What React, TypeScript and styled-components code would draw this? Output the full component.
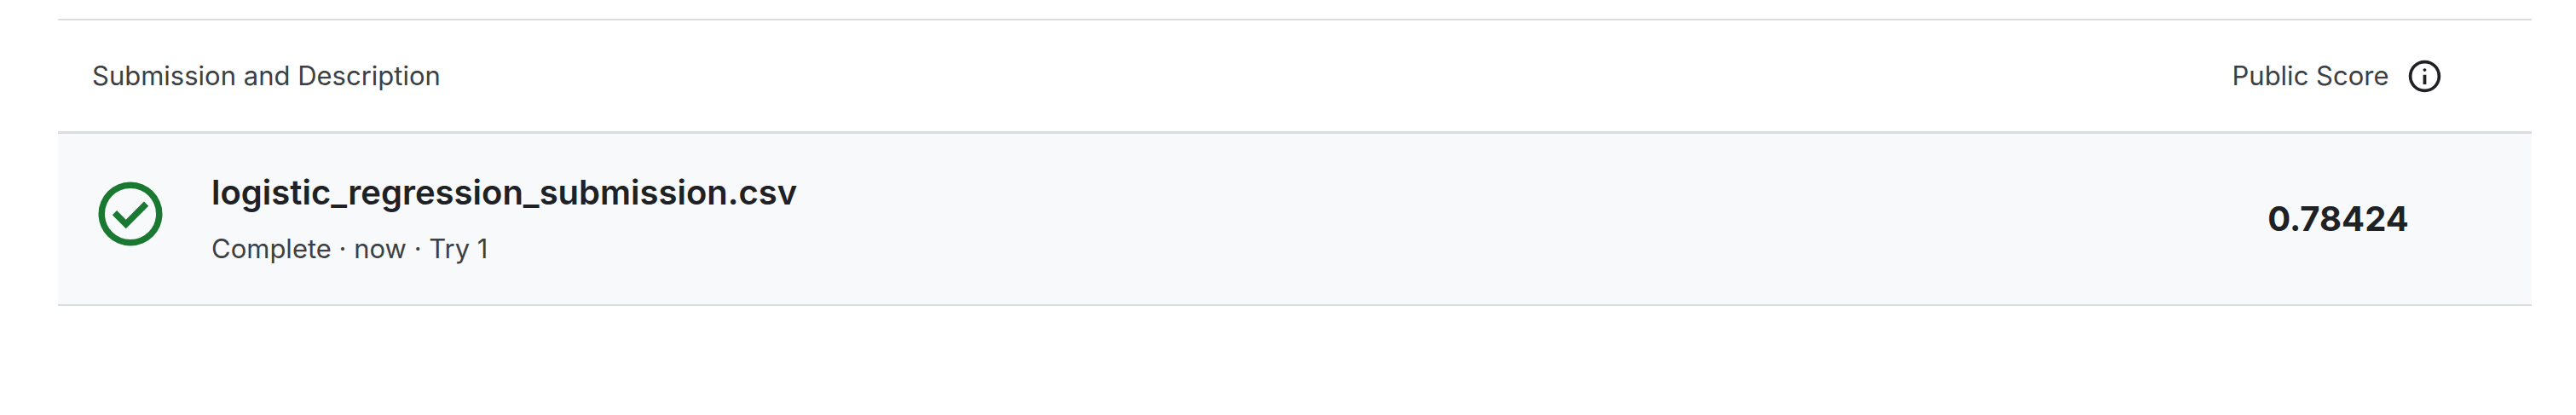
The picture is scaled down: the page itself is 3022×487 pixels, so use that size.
import React from "react";
import styled, { createGlobalStyle } from "styled-components";

const GlobalStyle = createGlobalStyle`
  *, *::before, *::after { box-sizing: border-box; }
  body {
    margin: 0;
    background: #ffffff;
    color: #202124;
    font-family: Inter, "Liberation Sans", sans-serif;
    font-optical-sizing: none;
  }
`;

const Page = styled.main`
  padding: 22px 52px 40px 68px;
`;

const SubmissionTable = styled.table`
  width: 100%;
  border-collapse: separate;
  border-spacing: 0;
  border-top: 2px solid #dadce0;
`;

const HeaderCell = styled.th<{ $score?: boolean }>`
  width: ${(p) => (p.$score ? "454px" : "auto")};
  height: 133px;
  padding: 0 ${(p) => (p.$score ? "0" : "40px")};
  border-bottom: 3px solid #dadce0;
  color: #3c4043;
  font-size: 31px;
  line-height: 40px;
  font-weight: 400;
  text-align: ${(p) => (p.$score ? "center" : "left")};
`;

const ScoreLabel = styled.div`
  display: flex;
  align-items: center;
  justify-content: center;
  gap: 20px;
`;

const InfoButton = styled.button`
  display: flex;
  padding: 0;
  border: 0;
  background: none;
  color: #202124;
  cursor: pointer;
`;

const BodyCell = styled.td<{ $score?: boolean }>`
  height: 202px;
  padding: ${(p) => (p.$score ? "0" : "0 40px")};
  border-bottom: 2px solid #dadce0;
  background: #f8f9fb;
  text-align: ${(p) => (p.$score ? "center" : "left")};
`;

const Submission = styled.div`
  display: flex;
  align-items: flex-start;
  gap: 50px;
`;

const StatusIcon = styled.span`
  display: flex;
  padding-top: 4px;
`;

const Details = styled.div`
  display: flex;
  flex-direction: column;
  gap: 22px;
`;

const FileName = styled.span`
  font-size: 40px;
  line-height: 48px;
  font-weight: 600;
`;

const Meta = styled.span`
  color: #3c4043;
  font-size: 31px;
  line-height: 40px;
`;

const Score = styled.span`
  font-size: 40px;
  line-height: 48px;
  font-weight: 700;
`;

const InfoIcon = () => (
  <svg width="45" height="45" viewBox="0 -960 960 960" fill="currentColor" aria-hidden="true">
    <path d="M440-280h80v-240h-80v240Zm40-320q17 0 28.5-11.5T520-640q0-17-11.5-28.5T480-680q-17 0-28.5 11.5T440-640q0 17 11.5 28.5T480-600Zm0 520q-83 0-156-31.5T197-197q-54-54-85.500-127T80-480q0-83 31.5-156T197-763q54-54 127-85.500T480-880q83 0 156 31.500T763-763q54 54 85.500 127T880-480q0 83-31.500 156T763-197q-54 54-127 85.500T480-80Zm0-80q134 0 227-93t93-227q0-134-93-227t-227-93q-134 0-227 93t-93 227q0 134 93 227t227 93Z" />
  </svg>
);

const CompleteIcon = () => (
  <svg width="90" height="90" viewBox="0 -960 960 960" fill="#1a7830" role="img" aria-label="Complete">
    <path d="m424-296 282-282-56-56-226 226-114-114-56 56 170 170Zm56 216q-83 0-156-31.500T197-197q-54-54-85.500-127T80-480q0-83 31.500-156T197-763q54-54 127-85.500T480-880q83 0 156 31.500T763-763q54 54 85.500 127T880-480q0 83-31.500 156T763-197q-54 54-127 85.500T480-80Zm0-80q134 0 227-93t93-227q0-134-93-227t-227-93q-134 0-227 93t-93 227q0 134 93 227t227 93Z" />
  </svg>
);

const submissions = [
  { file: "logistic_regression_submission.csv", meta: "Complete · now · Try 1", score: "0.78424" },
];

export default function App() {
  return (
    <>
      <GlobalStyle />
      <Page>
        <SubmissionTable>
          <thead>
            <tr>
              <HeaderCell scope="col">Submission and Description</HeaderCell>
              <HeaderCell scope="col" $score>
                <ScoreLabel>
                  Public Score
                  <InfoButton type="button" aria-label="About the public score">
                    <InfoIcon />
                  </InfoButton>
                </ScoreLabel>
              </HeaderCell>
            </tr>
          </thead>
          <tbody>
            {submissions.map((s) => (
              <tr key={s.file}>
                <BodyCell>
                  <Submission>
                    <StatusIcon>
                      <CompleteIcon />
                    </StatusIcon>
                    <Details>
                      <FileName>{s.file}</FileName>
                      <Meta>{s.meta}</Meta>
                    </Details>
                  </Submission>
                </BodyCell>
                <BodyCell $score>
                  <Score>{s.score}</Score>
                </BodyCell>
              </tr>
            ))}
          </tbody>
        </SubmissionTable>
      </Page>
    </>
  );
}
